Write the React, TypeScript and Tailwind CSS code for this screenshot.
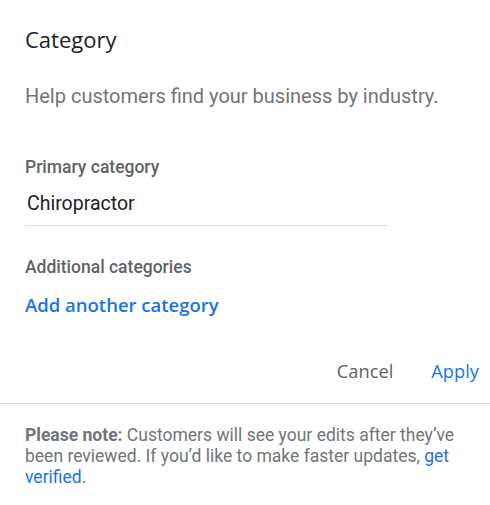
import React from 'react';

const sans = { fontFamily: 'Roboto, "Noto Sans", sans-serif' };
const display = { fontFamily: '"Open Sans", Roboto, sans-serif' };

export default function App() {
    return (
        <div className="w-[490px] h-[505px] bg-white" style={sans}>
            <div className="px-[25px] pt-[25px]">
                <h2 className="text-[22px] leading-[28px] text-[#202124]" style={display}>Category</h2>
                <p className="mt-[31px] text-[20px] leading-[24px] text-[#70757a]">
                    Help customers find your business by industry.
                </p>

                <div className="mt-[49px]">
                    <div className="text-[17.5px] leading-[20px] font-medium text-[#5f6368]">Primary category</div>
                    <div className="mt-[15px] w-[363px] border-b border-[#dadce0] pb-[9px] pl-[2px] text-[19.5px] leading-[24px] text-[#202124]">
                        Chiropractor
                    </div>
                </div>

                <div className="mt-[31px]">
                    <div className="text-[17.5px] leading-[20px] font-medium text-[#5f6368]">Additional categories</div>
                    <button className="mt-[17px] text-[18.5px] leading-[22px] font-semibold text-[#1a73e8]" style={display}>
                        Add another category
                    </button>
                </div>

                <div className="mt-[41px] mr-[-14px] flex items-center justify-end gap-[38px]">
                    <button className="text-[18.3px] leading-[22px] text-[#5f6368]" style={display}>Cancel</button>
                    <button className="text-[18.3px] leading-[22px] text-[#1a73e8]" style={display}>Apply</button>
                </div>
            </div>

            <div className="mt-[21px] border-t border-[#dadce0] px-[25px] pt-[21px]">
                <p className="text-[17.5px] leading-[21px] text-[#70757a]">
                    <span className="font-bold">Please note:</span> Customers will see your edits after they’ve been reviewed. If you’d like to make faster updates,{' '}
                    <a className="text-[#1a73e8]">get verified</a>.
                </p>
            </div>
        </div>
    );
}
